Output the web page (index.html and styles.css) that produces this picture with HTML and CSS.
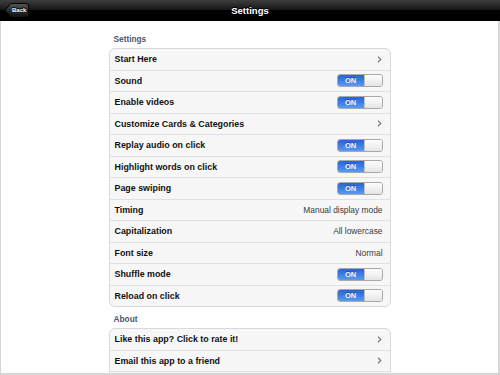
FILE: index.html
```html
<!DOCTYPE html>
<html>
    <head>
        <meta charset="utf-8">
        <title>Settings</title>
        <link rel="stylesheet" href="styles.css">
    </head>

    <body>
        <div class="screen">
            <header class="navbar">
                <a class="back" href="#">
                    <svg class="back-shape" width="25" height="15" viewBox="0 0 25 15">
                        <defs>
                            <linearGradient id="backfill" x1="0" y1="0" x2="0" y2="1">
                                <stop offset="0" stop-color="#5a5a5a"/>
                                <stop offset="0.5" stop-color="#2a2a2a"/>
                                <stop offset="1" stop-color="#111"/>
                            </linearGradient>
                        </defs>
                        <path d="M0.8 7.5 L6.5 1 Q7 0.5 8 0.5 L22 0.5 Q24.5 0.5 24.5 3 L24.5 12 Q24.5 14.5 22 14.5 L8 14.5 Q7 14.5 6.5 14 Z"
                            fill="url(#backfill)" stroke="#000" stroke-width="1"/>
                    </svg>
                    <span class="back-text">Back</span>
                </a>
                <h1 class="title">Settings</h1>
            </header>

            <main class="content">
                <h2 class="group-title">Settings</h2>
                <ul class="group">
                    <li class="row"><span class="label">Start Here</span><svg class="chevron" width="5" height="7" viewBox="0 0 5 7"><path d="M1 0.8 L3.8 3.5 L1 6.2" fill="none" stroke="#7f7f7f" stroke-width="1.3"/></svg></li>
                    <li class="row"><span class="label">Sound</span><span class="switch"><span class="switch-on">ON</span><span class="switch-knob"></span></span></li>
                    <li class="row"><span class="label">Enable videos</span><span class="switch"><span class="switch-on">ON</span><span class="switch-knob"></span></span></li>
                    <li class="row"><span class="label">Customize Cards &amp; Categories</span><svg class="chevron" width="5" height="7" viewBox="0 0 5 7"><path d="M1 0.8 L3.8 3.5 L1 6.2" fill="none" stroke="#7f7f7f" stroke-width="1.3"/></svg></li>
                    <li class="row"><span class="label">Replay audio on click</span><span class="switch"><span class="switch-on">ON</span><span class="switch-knob"></span></span></li>
                    <li class="row"><span class="label">Highlight words on click</span><span class="switch"><span class="switch-on">ON</span><span class="switch-knob"></span></span></li>
                    <li class="row"><span class="label">Page swiping</span><span class="switch"><span class="switch-on">ON</span><span class="switch-knob"></span></span></li>
                    <li class="row"><span class="label">Timing</span><span class="value">Manual display mode</span></li>
                    <li class="row"><span class="label">Capitalization</span><span class="value">All lowercase</span></li>
                    <li class="row"><span class="label">Font size</span><span class="value">Normal</span></li>
                    <li class="row"><span class="label">Shuffle mode</span><span class="switch"><span class="switch-on">ON</span><span class="switch-knob"></span></span></li>
                    <li class="row"><span class="label">Reload on click</span><span class="switch"><span class="switch-on">ON</span><span class="switch-knob"></span></span></li>
                </ul>

                <h2 class="group-title about">About</h2>
                <ul class="group">
                    <li class="row"><span class="label">Like this app? Click to rate it!</span><svg class="chevron" width="5" height="7" viewBox="0 0 5 7"><path d="M1 0.8 L3.8 3.5 L1 6.2" fill="none" stroke="#7f7f7f" stroke-width="1.3"/></svg></li>
                    <li class="row"><span class="label">Email this app to a friend</span><svg class="chevron" width="5" height="7" viewBox="0 0 5 7"><path d="M1 0.8 L3.8 3.5 L1 6.2" fill="none" stroke="#7f7f7f" stroke-width="1.3"/></svg></li>
                    <li class="row"></li>
                </ul>
            </main>
        </div>
    </body>
</html>
```

FILE: styles.css
```css
body {
    margin: 0;
    font-family: "Liberation Sans", Arial, sans-serif;
    background-color: white;
}

.screen {
    display: flex;
    flex-direction: column;
    width: 500px;
    height: 375px;
    overflow: hidden;
}

/* barra superior */
.navbar {
    display: grid;
    grid-template-columns: 1fr auto 1fr;
    align-items: center;
    height: 21px;
    flex-shrink: 0;
    padding: 0 4px;
    box-sizing: border-box;
    background: linear-gradient(#3e3e3e, #151515 50%, #000 52%, #000);
    border-bottom: 1px solid #000;
}

.back {
    display: grid;
    justify-self: start;
    width: 25px;
    height: 15px;
    text-decoration: none;
}

.back-shape,
.back-text {
    grid-area: 1 / 1;
}

.back-text {
    align-self: center;
    padding-left: 8px;
    font-size: 6px;
    font-weight: bold;
    color: white;
    text-shadow: 0 -1px 0 #000;
}

.title {
    grid-column: 2;
    margin: 0;
    font-size: 9.5px;
    font-weight: bold;
    color: white;
    text-shadow: 0 -1px 0 #000;
}

/* conteudo */
.content {
    flex: 1;
    display: flex;
    flex-direction: column;
    align-items: center;
    overflow: hidden;
    border-left: 1px solid #d6d6d6;
    border-right: 2px solid #d6d6d6;
    border-bottom: 2px solid #d6d6d6;
}

.group-title {
    width: 272px;
    margin: 13px 0 4px 0;
    line-height: 10px;
    font-size: 8.3px;
    font-weight: bold;
    color: #4c566c;
    text-shadow: 0 1px 0 white;
}

.group-title.about {
    margin-top: 7px;
}

.group {
    width: 282px;
    margin: 0;
    padding: 0;
    list-style: none;
    background-color: #f7f7f7;
    border: 1px solid #d9d9d9;
    border-radius: 6px;
    box-sizing: border-box;
    flex-shrink: 0;
}

.row {
    display: flex;
    align-items: center;
    justify-content: space-between;
    height: 21.5px;
    padding: 0 7px 0 5px;
    box-sizing: border-box;
    border-bottom: 1px solid #e0e0e0;
}

.row:last-child {
    border-bottom: none;
    height: 20.5px;
}

.label {
    font-size: 8.9px;
    font-weight: bold;
    color: #111;
}

.value {
    font-size: 8.4px;
    color: #3a3a3a;
}

.chevron {
    margin-right: 1px;
}

/* interruptor */
.switch {
    display: flex;
    width: 46px;
    height: 13px;
    border: 1px solid #a8a8a8;
    border-radius: 3px;
    overflow: hidden;
    box-sizing: border-box;
}

.switch-on {
    display: flex;
    align-items: center;
    justify-content: center;
    width: 26px;
    font-size: 7.5px;
    font-weight: bold;
    color: white;
    background: linear-gradient(#2a63d2, #3f80e6 55%, #5d9bf0);
    text-shadow: 0 -1px 0 rgba(0, 0, 50, 0.4);
}

.switch-knob {
    flex: 1;
    background: linear-gradient(#fdfdfd, #f2f2f2 50%, #e4e4e4);
    border-left: 1px solid #c0c0c0;
}
```
